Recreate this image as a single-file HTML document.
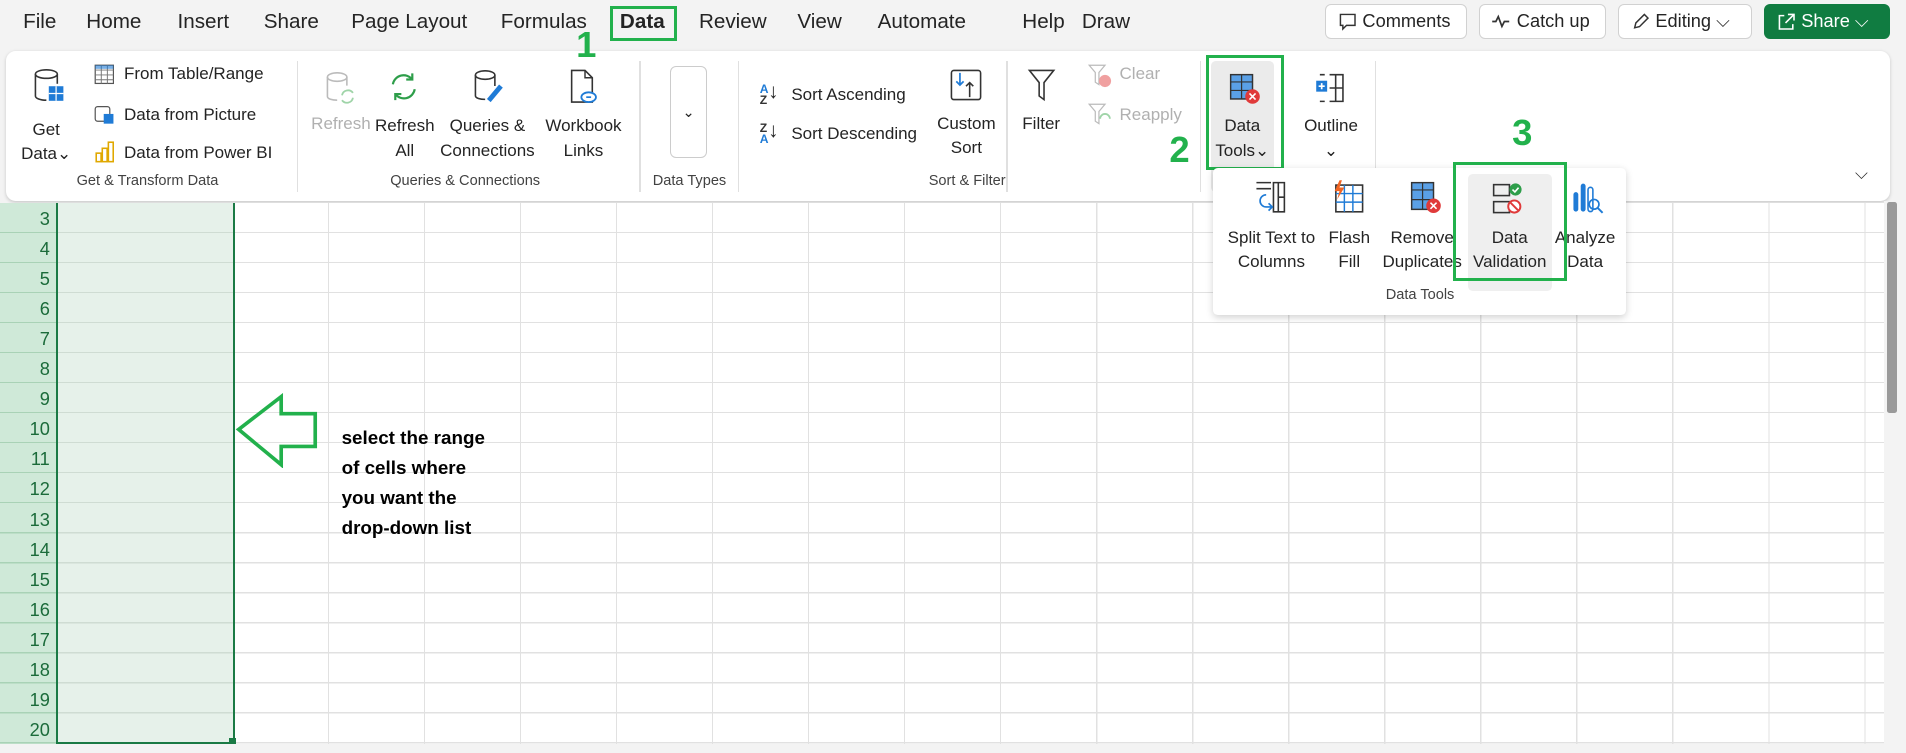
<!DOCTYPE html>
<html><head><meta charset="utf-8"><style>
*{margin:0;padding:0;box-sizing:border-box}
html,body{width:1906px;height:753px;overflow:hidden;background:#f3f3f3}
#w{position:relative;width:1568px;height:619px;zoom:1.21556;font-family:"Liberation Sans",sans-serif;color:#242424;overflow:hidden;background:#f3f3f3}
.a{position:absolute;white-space:nowrap}
.tab{position:absolute;top:8px;font-size:17px;color:#242424}
.btn{position:absolute;top:3px;height:29px;border:1px solid #d1d1d1;border-radius:5px;background:#fff;font-size:15px;line-height:27px;padding-left:30px}
.rib{position:absolute;left:5px;top:42px;width:1550px;height:123px;background:#fff;border-radius:8px;box-shadow:0 1px 3px rgba(0,0,0,.18)}
.t{position:absolute;font-size:14px;color:#242424;white-space:nowrap}
.c{text-align:center;line-height:20px}
.g{position:absolute;top:142px;font-size:12px;color:#424242;white-space:nowrap}
.sep{position:absolute;top:50px;width:1px;height:108px;background:#e0e0e0}
.grn{position:absolute;border:3px solid #22b14c}
.num{position:absolute;font-family:"Liberation Sans",sans-serif;font-weight:bold;color:#22b14c;font-size:30px}
.rows{background-image:repeating-linear-gradient(to bottom,transparent 0,transparent 23.7px,#e1e1e1 23.7px,#e1e1e1 24.7px)}
</style></head><body><div id="w">
<div class="tab" style="left:19px">File</div>
<div class="tab" style="left:71px">Home</div>
<div class="tab" style="left:146px">Insert</div>
<div class="tab" style="left:217px">Share</div>
<div class="tab" style="left:289px">Page Layout</div>
<div class="tab" style="left:412px">Formulas</div>
<div class="tab" style="left:510px;font-weight:bold">Data</div>
<div class="tab" style="left:575px">Review</div>
<div class="tab" style="left:656px">View</div>
<div class="tab" style="left:722px">Automate</div>
<div class="tab" style="left:841px">Help</div>
<div class="tab" style="left:890px">Draw</div>
<div class="grn" style="left:502px;top:5px;width:55px;height:29px"></div>

<div class="btn" style="left:1090px;width:117px">Comments<svg class="a" style="left:10px;top:6px" width="16" height="16" viewBox="0 0 16 16"><path d="M2 2h12v9H7l-3 3v-3H2z" fill="none" stroke="#333" stroke-width="1.2"/></svg></div>
<div class="btn" style="left:1217px;width:104px">Catch up<svg class="a" style="left:9px;top:7px" width="16" height="14" viewBox="0 0 16 14"><path d="M1 7h3l2-4 3 8 2-4h4" fill="none" stroke="#333" stroke-width="1.4"/></svg></div>
<div class="btn" style="left:1331px;width:110px">Editing ⌵<svg class="a" style="left:10px;top:6px" width="16" height="16" viewBox="0 0 16 16"><path d="M3 13l1-4 7-7 3 3-7 7z" fill="none" stroke="#333" stroke-width="1.2"/></svg></div>
<div class="btn" style="left:1451px;width:104px;background:#107c41;border-color:#107c41;color:#fff">Share ⌵<svg class="a" style="left:10px;top:6px" width="16" height="16" viewBox="0 0 16 16"><path d="M6 3H2v11h11v-4M9 2h5v5M14 2L7 9" fill="none" stroke="#fff" stroke-width="1.3"/></svg></div>

<div class="rib"></div>
<svg class="a" style="left:27px;top:56px" width="26" height="32" viewBox="0 0 26 32"><ellipse cx="11" cy="5" rx="9" ry="3.5" fill="#fff" stroke="#333" stroke-width="1.3"/><path d="M2 5v18c0 2 4 3.5 9 3.5" fill="none" stroke="#333" stroke-width="1.3"/><path d="M20 5v8" stroke="#333" stroke-width="1.3"/><rect x="13" y="15" width="12" height="12" fill="#1f7bd6"/><path d="M13 21h12M19 15v12" stroke="#fff"/></svg>
<div class="t c" style="left:16px;top:97px;width:44px">Get<br>Data⌄</div>
<svg class="a" style="left:77px;top:53px" width="17" height="17" viewBox="0 0 17 17"><rect x="1" y="1" width="15" height="15" fill="none" stroke="#555"/><path d="M1 5h15M1 9h15M1 13h15M6 1v15M11 1v15" stroke="#777" stroke-width=".8"/><rect x="1" y="1" width="15" height="3" fill="#1f7bd6" opacity=".6"/></svg>
<div class="t" style="left:102px;top:53px">From Table/Range</div>
<svg class="a" style="left:77px;top:85px" width="17" height="18" viewBox="0 0 17 18"><rect x="1" y="3" width="12" height="12" rx="2" fill="none" stroke="#555"/><rect x="8" y="9" width="8" height="8" fill="#1f7bd6"/></svg>
<div class="t" style="left:102px;top:86px">Data from Picture</div>
<svg class="a" style="left:78px;top:116px" width="16" height="18" viewBox="0 0 16 18"><rect x="1" y="10" width="4" height="7" fill="none" stroke="#e0a800" stroke-width="1.3"/><rect x="6" y="6" width="4" height="11" fill="none" stroke="#e0a800" stroke-width="1.3"/><rect x="11" y="1" width="4" height="16" fill="none" stroke="#e0a800" stroke-width="1.3"/></svg>
<div class="t" style="left:102px;top:118px">Data from Power BI</div>
<div class="g" style="left:63px">Get &amp; Transform Data</div>
<div class="sep" style="left:244px"></div>

<svg class="a" style="left:267px;top:58px" width="26" height="28" viewBox="0 0 26 28"><ellipse cx="10" cy="5" rx="8" ry="3.5" fill="none" stroke="#bbb" stroke-width="1.3"/><path d="M2 5v16c0 2 4 3 8 3M18 5v7" fill="none" stroke="#bbb" stroke-width="1.3"/><path d="M14 20a5 5 0 0 1 9-2M23 22a5 5 0 0 1-9 2" fill="none" stroke="#9fd4a8" stroke-width="1.5"/></svg>
<div class="t" style="left:256px;top:94px;color:#b0b0b0">Refresh</div>
<svg class="a" style="left:319px;top:58px" width="26" height="26" viewBox="0 0 26 26"><path d="M4 11a9 9 0 0 1 16-4M22 15a9 9 0 0 1-16 4" fill="none" stroke="#2e9e4a" stroke-width="1.8"/><path d="M20 2v5h-5M6 24v-5h5" fill="none" stroke="#2e9e4a" stroke-width="1.8"/></svg>
<div class="t c" style="left:306px;top:94px;width:54px">Refresh<br>All</div>
<svg class="a" style="left:389px;top:57px" width="26" height="30" viewBox="0 0 26 30"><ellipse cx="10" cy="5" rx="8" ry="3.5" fill="#fff" stroke="#333" stroke-width="1.3"/><path d="M2 5v17c0 2 4 3 8 3M18 5v9" fill="none" stroke="#333" stroke-width="1.3"/><path d="M13 26l10-12" stroke="#1f7bd6" stroke-width="4"/></svg>
<div class="t c" style="left:358px;top:94px;width:86px">Queries &amp;<br>Connections</div>
<svg class="a" style="left:467px;top:56px" width="26" height="32" viewBox="0 0 26 32"><path d="M3 2h11l6 6v20H3z" fill="none" stroke="#333" stroke-width="1.3"/><path d="M14 2v6h6" fill="none" stroke="#333" stroke-width="1.2"/><ellipse cx="17" cy="24" rx="6" ry="4" fill="#fff" stroke="#1f7bd6" stroke-width="1.5"/><path d="M15 24h4" stroke="#1f7bd6" stroke-width="1.4"/></svg>
<div class="t c" style="left:444px;top:94px;width:72px">Workbook<br>Links</div>
<div class="g" style="left:321px">Queries &amp; Connections</div>
<div class="sep" style="left:526px"></div>

<div class="a" style="left:551px;top:54px;width:31px;height:76px;border:1px solid #ccc;border-radius:5px;text-align:center;line-height:76px;font-size:12px">⌄</div>
<div class="g" style="left:537px">Data Types</div>
<div class="sep" style="left:607px"></div>

<div class="a" style="left:625px;top:69px;font-size:10px;line-height:9px;color:#1f7bd6;font-weight:bold">A<br><span style="color:#333">Z</span></div><div class="t" style="left:632px;top:66px;font-size:17px">↓</div>
<div class="t" style="left:651px;top:70px">Sort Ascending</div>
<div class="a" style="left:625px;top:101px;font-size:10px;line-height:9px;color:#333;font-weight:bold">Z<br><span style="color:#1f7bd6">A</span></div><div class="t" style="left:632px;top:98px;font-size:17px">↓</div>
<div class="t" style="left:651px;top:102px">Sort Descending</div>
<svg class="a" style="left:781px;top:56px" width="28" height="28" viewBox="0 0 28 28"><rect x="2" y="2" width="24" height="24" rx="2" fill="none" stroke="#333" stroke-width="1.3"/><path d="M9 4v10M6 11l3 3 3-3" fill="none" stroke="#1f7bd6" stroke-width="1.4"/><path d="M17 24V12M14 15l3-3 3 3" fill="none" stroke="#333" stroke-width="1.3"/></svg>
<div class="t c" style="left:767px;top:92px;width:56px">Custom<br>Sort</div>
<div class="sep" style="left:828px"></div>
<svg class="a" style="left:845px;top:56px" width="24" height="28" viewBox="0 0 24 28"><path d="M2 2h20l-8 10v14l-4-3V12z" fill="none" stroke="#333" stroke-width="1.3"/></svg>
<div class="t" style="left:841px;top:94px">Filter</div>
<svg class="a" style="left:895px;top:53px" width="20" height="20" viewBox="0 0 20 20"><path d="M1 1h13l-5 6v10l-3-2V7z" fill="none" stroke="#bbb"/><circle cx="14" cy="14" r="5" fill="#f0a0a0"/></svg>
<div class="t" style="left:921px;top:53px;color:#b0b0b0">Clear</div>
<svg class="a" style="left:895px;top:85px" width="20" height="20" viewBox="0 0 20 20"><path d="M1 1h13l-5 6v10l-3-2V7z" fill="none" stroke="#bbb"/><path d="M10 13a4 4 0 0 1 8 0" fill="none" stroke="#9fd4a8" stroke-width="1.5"/></svg>
<div class="t" style="left:921px;top:86px;color:#b0b0b0">Reapply</div>
<div class="g" style="left:764px">Sort &amp; Filter</div>
<div class="sep" style="left:987px"></div>

<div class="a" style="left:996px;top:50px;width:52px;height:108px;background:#ebebeb;border-radius:4px"></div>
<svg class="a" style="left:1009px;top:58px" width="30" height="30" viewBox="0 0 30 30"><rect x="3" y="3" width="18" height="20" fill="#5aa0e6" stroke="#333" stroke-width="1.2"/><path d="M3 9h18M3 16h18M12 3v20" stroke="#333" stroke-width="1"/><circle cx="21" cy="21" r="6" fill="#e03a3a"/><path d="M18.5 18.5l5 5M23.5 18.5l-5 5" stroke="#fff" stroke-width="1.3"/></svg>
<div class="t c" style="left:996px;top:94px;width:52px">Data<br>Tools⌄</div>
<div class="grn" style="left:992px;top:45px;width:64px;height:95px"></div>
<div class="num" style="left:962px;top:106px">2</div>
<div class="num" style="left:474px;top:20px">1</div>
<svg class="a" style="left:1082px;top:58px" width="26" height="28" viewBox="0 0 26 28"><rect x="1" y="8" width="9" height="9" fill="#1f7bd6"/><path d="M5.5 10v5M3 12.5h5" stroke="#fff" stroke-width="1.4"/><path d="M12 3h11v22H12M17 3v22M12 14h11M4 3h4M4 25h4" fill="none" stroke="#333" stroke-width="1.3"/></svg>
<div class="t c" style="left:1068px;top:94px;width:54px">Outline<br>⌄</div>
<div class="sep" style="left:1131px"></div>
<div class="a" style="left:1526px;top:135px;font-size:14px">⌵</div>

<!-- grid -->
<div class="a" style="left:0;top:167px;width:46px;height:445px;background-color:#cfe9d8;background-image:repeating-linear-gradient(to bottom,transparent 0,transparent 23.7px,#a9d2b6 23.7px,#a9d2b6 24.7px)"></div>
<div class="a" style="left:192px;top:167px;width:1358px;height:445px;background-color:#fff;background-image:repeating-linear-gradient(to bottom,transparent 0,transparent 23.7px,#e1e1e1 23.7px,#e1e1e1 24.7px),repeating-linear-gradient(to right,transparent 0,transparent 78px,#e1e1e1 78px,#e1e1e1 79px)"></div>
<div class="a" style="left:46px;top:167px;width:147px;height:445px;background-color:#e6f1ea;background-image:repeating-linear-gradient(to bottom,transparent 0,transparent 23.7px,#cfdcd3 23.7px,#cfdcd3 24.7px);border:2px solid #1b7a45;border-top:none"></div>
<div class="a" style="left:188px;top:607px;width:6px;height:6px;background:#1b7a45"></div>
<div class="a" style="left:0;top:612px;width:1568px;height:7px;background:#f3f3f3"></div>
<div class="a" style="left:1550px;top:165px;width:18px;height:447px;background:#f3f3f3"></div>
<div class="a" style="left:1552px;top:166px;width:9px;height:174px;background:#9a9a9a;border-radius:2px"></div>
<div class="a" style="left:0;top:168px;width:41px;font-size:15px;color:#1b6b3a;text-align:right;line-height:24.7px">3<br>4<br>5<br>6<br>7<br>8<br>9<br>10<br>11<br>12<br>13<br>14<br>15<br>16<br>17<br>18<br>19<br>20</div>

<svg class="a" style="left:193px;top:323px" width="72" height="62" viewBox="0 0 72 62"><path d="M3 30L38 3v14h28v27H38v15z" fill="none" stroke="#22b14c" stroke-width="3" stroke-linejoin="miter"/></svg>
<div class="a" style="left:281px;top:348px;font-size:15.5px;font-weight:bold;line-height:24.7px;color:#000">select the range<br>of cells where<br>you want the<br>drop-down list</div>

<!-- dropdown -->
<div class="a" style="left:998px;top:138px;width:340px;height:121px;background:#fff;border-radius:4px;box-shadow:0 2px 6px rgba(0,0,0,.18)"></div>
<div class="a" style="left:1208px;top:143px;width:69px;height:96px;background:#efefef;border-radius:4px"></div>
<svg class="a" style="left:1032px;top:147px" width="28" height="30" viewBox="0 0 28 30"><path d="M2 3h12M2 8h12M16 3h4v24h-4zM20 3h5v24h-5M20 15h5" fill="none" stroke="#333" stroke-width="1.3"/><path d="M10 13a5 5 0 0 0 0 10h4M12 20l3 3-3 3" fill="none" stroke="#1f7bd6" stroke-width="1.4"/></svg>
<div class="t c" style="left:1006px;top:186px;width:80px">Split Text to<br>Columns</div>
<svg class="a" style="left:1095px;top:147px" width="30" height="30" viewBox="0 0 30 30"><rect x="4" y="5" width="22" height="22" fill="none" stroke="#333" stroke-width="1.3"/><path d="M4 12h22M4 19h22M11 5v22M18 5v22" stroke="#1f7bd6" stroke-width="1.2"/><path d="M7 1l-4 9h4l-2 7 6-10H7l2-6z" fill="#f26522"/></svg>
<div class="t c" style="left:1090px;top:186px;width:40px">Flash<br>Fill</div>
<svg class="a" style="left:1158px;top:147px" width="30" height="30" viewBox="0 0 30 30"><rect x="3" y="3" width="18" height="22" fill="#5aa0e6" stroke="#333" stroke-width="1.2"/><path d="M3 9h18M3 17h18M12 3v22" stroke="#333"/><circle cx="21" cy="22" r="6" fill="#e03a3a"/><path d="M18.5 19.5l5 5M23.5 19.5l-5 5" stroke="#fff" stroke-width="1.3"/></svg>
<div class="t c" style="left:1135px;top:186px;width:70px;overflow:hidden">Remove<br>Duplicates</div>
<svg class="a" style="left:1226px;top:149px" width="30" height="30" viewBox="0 0 30 30"><rect x="3" y="3" width="13" height="9" fill="none" stroke="#333" stroke-width="1.3"/><rect x="3" y="17" width="13" height="9" fill="none" stroke="#333" stroke-width="1.3"/><circle cx="21" cy="7" r="5" fill="#2e9e4a"/><path d="M18.5 7l2 2 3-3.5" fill="none" stroke="#fff" stroke-width="1.3"/><circle cx="20" cy="21" r="5" fill="#fff" stroke="#e03a3a" stroke-width="1.6"/><path d="M17 18l6 6" stroke="#e03a3a" stroke-width="1.6"/></svg>
<div class="t c" style="left:1206px;top:186px;width:72px">Data<br>Validation</div>
<svg class="a" style="left:1292px;top:148px" width="28" height="30" viewBox="0 0 28 30"><rect x="2" y="10" width="4" height="16" rx="2" fill="#1f7bd6"/><rect x="8" y="3" width="4" height="23" rx="2" fill="#1f7bd6"/><rect x="14" y="6" width="4" height="20" rx="2" fill="none" stroke="#1f7bd6" stroke-width="1.3"/><circle cx="19" cy="20" r="4" fill="none" stroke="#1f7bd6" stroke-width="1.4"/><path d="M22 23l4 4" stroke="#1f7bd6" stroke-width="1.6"/></svg>
<div class="t c" style="left:1276px;top:186px;width:56px">Analyze<br>Data</div>
<div class="g" style="left:1140px;top:236px">Data Tools</div>
<div class="grn" style="left:1195px;top:133px;width:94px;height:98px"></div>
<div class="num" style="left:1244px;top:92px">3</div>
</div></body></html>
